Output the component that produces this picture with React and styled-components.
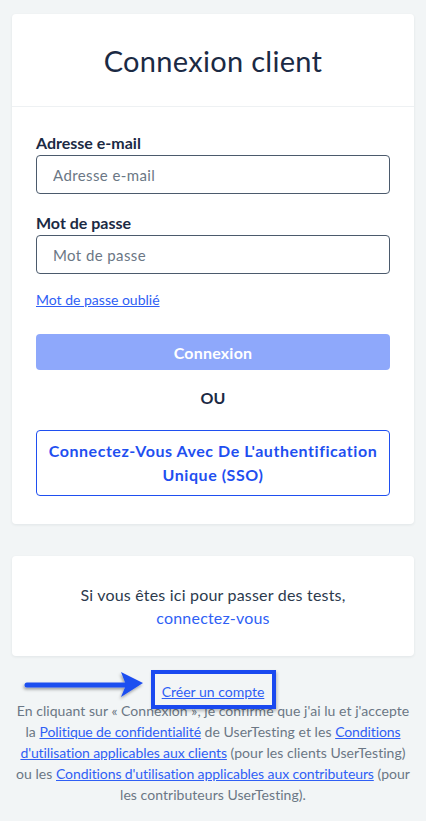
import React from 'react'
import styled, { createGlobalStyle } from 'styled-components'

const GlobalStyle = createGlobalStyle`
  html, body {
    margin: 0;
    padding: 0;
    background: #f2f5f6;
    font-family: Lato, "Open Sans", sans-serif;
    -webkit-font-smoothing: antialiased;
  }
`

const Page = styled.div`
  display: flex;
  flex-direction: column;
  padding: 14px 12px 0 12px;
  min-height: 821px;
  box-sizing: border-box;
`

const Card = styled.div`
  background: #fff;
  border-radius: 4px;
  box-shadow: 0 1px 3px rgba(30, 50, 70, 0.08);
  margin-bottom: ${props => props.gap || 0}px;
`

const CardHead = styled.div`
  height: 92px;
  display: flex;
  align-items: center;
  justify-content: center;
  border-bottom: 1px solid #eef1f3;
`

const Title = styled.h1`
  margin: 0;
  font-size: 29px;
  font-weight: 400;
  color: #1b2a44;
  letter-spacing: 0.3px;
`

const Form = styled.div`
  display: flex;
  flex-direction: column;
  padding: 26px 24px 28px 24px;
`

const Label = styled.label`
  font-size: 16px;
  font-weight: 700;
  color: #1b2a44;
  line-height: 20px;
  margin-bottom: 2px;
`

const Input = styled.input`
  height: 39px;
  box-sizing: border-box;
  border: 1px solid #4b5a6c;
  border-radius: 4px;
  padding: 0 16px;
  font-family: inherit;
  font-size: 15px;
  letter-spacing: 0.4px;
  color: #1b2a44;
  margin-bottom: ${props => props.gap || 0}px;
  &::placeholder {
    color: #6b7785;
  }
`

const SmallLink = styled.a`
  font-size: 14px;
  color: #2f5ff5;
  text-decoration: underline;
  line-height: 18px;
  align-self: flex-start;
`

const PrimaryButton = styled.button`
  margin-top: 25px;
  height: 36px;
  border: none;
  border-radius: 4px;
  background: #8ea8fb;
  color: #fff;
  font-family: inherit;
  font-size: 16px;
  font-weight: 700;
  letter-spacing: 0.2px;
`

const Or = styled.div`
  text-align: center;
  font-size: 16px;
  font-weight: 700;
  color: #1b2a44;
  margin: 18px 0 22px 0;
  line-height: 20px;
`

const OutlineButton = styled.button`
  height: 66px;
  border: 1px solid #1f4ff0;
  border-radius: 4px;
  background: #fff;
  color: #1f4ff0;
  font-family: inherit;
  font-size: 16px;
  font-weight: 700;
  line-height: 24px;
  letter-spacing: 0.55px;
  padding: 0 6px;
`

const Notice = styled.div`
  height: 100px;
  display: flex;
  flex-direction: column;
  align-items: center;
  justify-content: center;
  font-size: 16px;
  letter-spacing: 0.2px;
  line-height: 23px;
  color: #2c3a4d;
`

const NoticeLink = styled.a`
  color: #2f5ff5;
  text-decoration: none;
`

const Footer = styled.div`
  display: flex;
  flex-direction: column;
  align-items: center;
  margin: 0 -4px;
`

const CreateWrap = styled.span`
  position: relative;
  display: inline-block;
  margin-top: 26px;
  line-height: 18px;
`

const Highlight = styled.span`
  position: absolute;
  left: -11px;
  right: -12px;
  top: -12px;
  bottom: -8px;
  border: 4px solid #1a49f0;
  box-shadow: 1px 2px 3px rgba(0, 0, 0, 0.25);
  pointer-events: none;
`

const Arrow = styled.svg`
  position: absolute;
  left: -137px;
  top: -13px;
  overflow: visible;
`

const Legal = styled.p`
  margin: -1px 0 0 0;
  text-align: center;
  font-size: 14px;
  letter-spacing: 0.05px;
  line-height: 21px;
  color: #6b7785;
`

const Keep = styled.span`
  white-space: nowrap;
`

const LegalLink = styled.a`
  color: #2f5ff5;
  text-decoration: underline;
  letter-spacing: -0.1px;
`

export default function App() {
  return (
    <Page>
      <GlobalStyle />
      <Card gap={32}>
        <CardHead>
          <Title>Connexion client</Title>
        </CardHead>
        <Form>
          <Label>Adresse e-mail</Label>
          <Input placeholder="Adresse e-mail" gap={19} />
          <Label>Mot de passe</Label>
          <Input placeholder="Mot de passe" type="password" gap={17} />
          <SmallLink href="#">Mot de passe oublié</SmallLink>
          <PrimaryButton>Connexion</PrimaryButton>
          <Or>OU</Or>
          <OutlineButton>Connectez-Vous Avec De L'authentification Unique (SSO)</OutlineButton>
        </Form>
      </Card>
      <Card>
        <Notice>
          <span>Si vous êtes ici pour passer des tests,</span>
          <NoticeLink href="#">connectez-vous</NoticeLink>
        </Notice>
      </Card>
      <Footer>
        <CreateWrap>
          <SmallLink href="#">Créer un compte</SmallLink>
          <Highlight />
          <Arrow width="120" height="30" viewBox="0 0 120 30">
            <defs>
              <filter id="sh" x="-20%" y="-50%" width="140%" height="200%">
                <feDropShadow dx="-1" dy="2" stdDeviation="1.5" floodColor="#000" floodOpacity="0.35" />
              </filter>
            </defs>
            <g filter="url(#sh)" fill="#1f4ff0">
              <line x1="2" y1="16" x2="100" y2="16" stroke="#1f4ff0" strokeWidth="5" strokeLinecap="round" />
              <path d="M96 3 L118 14 L96 28 L101 16 Z" />
            </g>
          </Arrow>
        </CreateWrap>
        <Legal>
          En cliquant sur « Connexion », je confirme que j'ai lu et j'accepte{' '}
          <Keep>
            la <LegalLink href="#">Politique de confidentialité</LegalLink>
          </Keep>{' '}
          de UserTesting et les{' '}
          <LegalLink href="#">Conditions d'utilisation applicables aux clients</LegalLink> (pour les clients
          UserTesting){' '}
          <Keep>
            ou les <LegalLink href="#">Conditions d'utilisation applicables aux contributeurs</LegalLink>
          </Keep>{' '}
          (pour les contributeurs UserTesting).
        </Legal>
      </Footer>
    </Page>
  )
}
